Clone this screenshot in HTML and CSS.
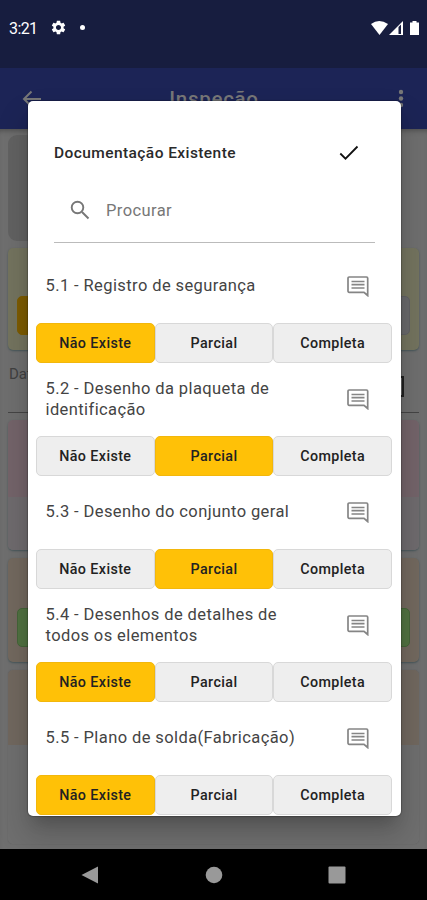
FILE: index.html
```html
<!DOCTYPE html>
<html lang="pt">
<head>
<meta charset="utf-8">
<title>Inspeção</title>
<link rel="stylesheet" href="styles.css">
</head>
<body>
<svg class="defs" width="0" height="0"><defs>
<symbol id="comment" viewBox="0 0 22 21"><path d="M20.700 19.500L17 16.300H2.200Q1 16.300 1 15.100V2.200Q1 1 2.200 1H19.500Q20.700 1 20.700 2.200ZM4.500 5.500H17.500M4.500 8.700H17.500M4.500 12H17.500"/></symbol>
</defs></svg>
<div class="screen">
  <header class="status">
    <span class="time">3:21</span>
    <svg class="gear" viewBox="0 0 24 24"><path d="M19.140 12.940c.04-.3.06-.61.06-.94 0-.32-.02-.64-.07-.94l2.030-1.580c.18-.14.23-.41.12-.61l-1.920-3.320c-.12-.22-.37-.29-.59-.22l-2.390.96c-.5-.38-1.030-.7-1.620-.94l-.36-2.540c-.04-.24-.24-.41-.48-.41h-3.840c-.24 0-.43.17-.47.41l-.36 2.540c-.59.24-1.130.57-1.620.94l-2.390-.96c-.22-.08-.47 0-.59.22L2.740 8.870c-.12.21-.08.47.12.61l2.030 1.580c-.05.3-.09.63-.09.94s.02.64.07.94l-2.030 1.580c-.18.14-.23.41-.12.61l1.920 3.320c.12.22.37.29.59.22l2.390-.96c.5.38 1.030.7 1.620.94l.36 2.540c.05.24.24.41.48.41h3.840c.24 0 .44-.17.47-.41l.36-2.540c.59-.24 1.130-.56 1.620-.94l2.390.96c.22.08.47 0 .59-.22l1.920-3.320c.12-.22.07-.47-.12-.61l-2.010-1.580zM12 15.600c-1.980 0-3.600-1.620-3.600-3.600s1.620-3.600 3.600-3.600 3.600 1.620 3.600 3.600-1.620 3.600-3.600 3.600z"/></svg>
    <i class="dot"></i>
    <svg class="signals" viewBox="0 0 50 16"><path d="M0 4Q8 -2 17 4L8.500 15z"/><path d="M18 15L32 1V15z"/><path class="cut" d="M27.500 7V14H30V4.500z"/><path d="M39 2.500H41.500V1H45.500V2.500H48V15H39z"/></svg>
  </header>
  <div class="appbar">
    <svg class="back" viewBox="0 0 20 18"><path d="M19 9H2M9.500 1.500L2 9l7.500 7.500"/></svg>
    <span class="page-title">Inspeção</span>
    <svg class="more" viewBox="0 0 6 20"><circle cx="3" cy="3" r="2.200"/><circle cx="3" cy="9.500" r="2.200"/><circle cx="3" cy="16" r="2.200"/></svg>
  </div>
  <main class="page">
    <section class="hero"></section>
    <section class="card yellow"><div class="choice"><i></i><i></i><i></i></div></section>
    <div class="date"><span>Data</span><i></i></div>
    <section class="card pink"></section>
    <section class="card orange"><div class="green"></div></section>
    <section class="card last"></section>
  </main>
  <nav class="nav">
    <svg viewBox="0 0 20 20"><path d="M1.500 10L18 1.500v17z"/></svg>
    <svg viewBox="0 0 20 20"><circle cx="10" cy="10" r="8.300"/></svg>
    <svg viewBox="0 0 20 20"><rect x="1.500" y="1.500" width="17" height="17" rx="1"/></svg>
  </nav>
</div>
<div class="dialog">
  <div class="head"><h1>Documentação Existente</h1><svg viewBox="0 0 20 16"><path d="M1.300 8.500L6.500 13.700L18.500 1.500"/></svg></div>
  <div class="search"><svg viewBox="0 0 20 20"><circle cx="7.500" cy="7.500" r="5.800"/><path d="M12 12l6.500 6.500"/></svg><span>Procurar</span></div>
  <div class="list">
    <div class="item"><div class="row"><p>5.1 - Registro de segurança</p><svg><use href="#comment"/></svg></div>
      <div class="options"><button class="on">Não Existe</button><button>Parcial</button><button>Completa</button></div></div>
    <div class="item"><div class="row"><p>5.2 - Desenho da plaqueta de<br>identificação</p><svg><use href="#comment"/></svg></div>
      <div class="options"><button>Não Existe</button><button class="on">Parcial</button><button>Completa</button></div></div>
    <div class="item"><div class="row"><p>5.3 - Desenho do conjunto geral</p><svg><use href="#comment"/></svg></div>
      <div class="options"><button>Não Existe</button><button class="on">Parcial</button><button>Completa</button></div></div>
    <div class="item"><div class="row"><p>5.4 - Desenhos de detalhes de<br>todos os elementos</p><svg><use href="#comment"/></svg></div>
      <div class="options"><button class="on">Não Existe</button><button>Parcial</button><button>Completa</button></div></div>
    <div class="item"><div class="row"><p>5.5 - Plano de solda(Fabricação)</p><svg><use href="#comment"/></svg></div>
      <div class="options"><button class="on">Não Existe</button><button>Parcial</button><button>Completa</button></div></div>
  </div>
</div>
</body>
</html>
```
FILE: styles.css
```css
* { box-sizing: border-box; }
body { margin: 0; font-family: Roboto, sans-serif; overflow: hidden; }
.defs { position: absolute; }
.screen { height: 900px; display: flex; flex-direction: column; background: #6f6f6f; }
.status { height: 68px; flex: none; background: #171d3f; display: flex; align-items: flex-start; padding: 19px 7px 0 9px; color: #fff; }
.time { font-size: 16px; line-height: 19px; width: 41px; letter-spacing: -.6px; }
.gear { width: 17px; height: 17px; fill: #fff; }
.dot { width: 5px; height: 5px; border-radius: 50%; background: #fff; margin: 6px 0 0 13px; }
.signals { width: 50px; height: 16px; margin: 1px -1px 0 auto; fill: #fff; }
.signals .cut { fill: #171d3f; }
.appbar { height: 61px; flex: none; background: #1c2456; display: flex; align-items: center; justify-content: space-between; padding: 0 22px; color: #777; }
.back { width: 20px; height: 18px; fill: none; stroke: #777; stroke-width: 2; }
.page-title { font-size: 20.5px; line-height: 24px; font-weight: 500; letter-spacing: .7px; margin-right: 12px; }
.more { width: 6px; height: 20px; fill: #777; margin-right: 1px; }
.page { height: 720px; flex: none; padding: 6px 8px 0; overflow: hidden; box-shadow: inset 0 5px 5px -3px #505050; }
.hero { width: 60px; height: 106px; border-radius: 9px; background: #626262; }
.card { border-radius: 5px; box-shadow: 0 1px 2px #46565a; }
.yellow { height: 102px; margin-top: 7px; padding: 48px 9px 0; background: #74745f; }
.choice { display: flex; height: 39px; }
.choice i { flex: 1; border: 1px solid #626265; border-radius: 5px; background: #6a6a6c; }
.choice i:first-child { background: #7d5c00; border-color: #7d5c00; }
.date { height: 63px; display: flex; align-items: flex-end; justify-content: space-between; padding: 0 15px 15px 1px; border-bottom: 1px solid #454545; color: #414141; font-size: 15px; }
.date span { padding-bottom: 14px; }
.date i { width: 20px; height: 21px; border: 2px solid #202020; }
.pink { height: 130px; margin-top: 7px; background: linear-gradient(#74646a 77px, #6f6b6e 77px); }
.orange { height: 104px; margin-top: 8px; padding: 50px 9px 0; background: #73695f; }
.green { height: 39px; border: 1px solid #456539; border-radius: 5px; background: #527342; }
.last { height: 174px; margin-top: 8px; background: linear-gradient(#71685f 75px, #6f6f6f 75px); box-shadow: 0 0 1px #505050; }
.nav { height: 51px; background: #000; display: flex; justify-content: space-between; align-items: center; padding: 0 80px; }
.nav svg { width: 20px; height: 20px; fill: #999; }
.dialog { position: absolute; left: 28px; top: 101px; width: 372.5px; height: 715px; background: #fff; border-radius: 5px; overflow: hidden; box-shadow: 0 0 1px 1px rgba(0,0,0,.2), 0 11px 15px -7px rgba(0,0,0,.2), 0 18px 30px 3px rgba(0,0,0,.16); clip-path: inset(-40px -40px -33px -40px); }
.head { height: 84px; padding: 19px 42px 0 26px; display: flex; align-items: center; justify-content: space-between; }
h1 { margin: 0; font-size: 15.5px; font-weight: 500; letter-spacing: .42px; color: #2a2a2a; white-space: nowrap; }
.head svg { width: 20px; height: 16px; fill: none; stroke: #111; stroke-width: 1.8; }
.search { height: 58px; margin: 0 26px; border-bottom: 1px solid #bbb; display: flex; align-items: center; padding: 0 0 7px 16px; color: #777; font-size: 16.5px; letter-spacing: .4px; }
.search svg { width: 20px; height: 20px; margin-right: 16px; fill: none; stroke: #777; stroke-width: 1.9; }
.list { padding: 6px 8.5px 0 8px; }
.item { height: 113px; }
.row { height: 74px; display: flex; align-items: center; justify-content: space-between; padding: 0 23px 0 9.500px; }
.row p { margin: 0; padding-top: 1px; font-size: 16.5px; line-height: 20.5px; color: #444; letter-spacing: .4px; white-space: nowrap; }
.row svg { width: 22px; height: 21px; fill: none; stroke: #858585; stroke-width: 1.700; flex: none; }
.options { display: flex; height: 39.5px; }
button { flex: 1; padding: 0; font: 500 14.3px Roboto, sans-serif; letter-spacing: .4px; color: #222; background: #eee; border: 1px solid #d8d8d8; border-radius: 5px; }
button.on { background: #ffc107; border-color: #f2b70c; }
```
